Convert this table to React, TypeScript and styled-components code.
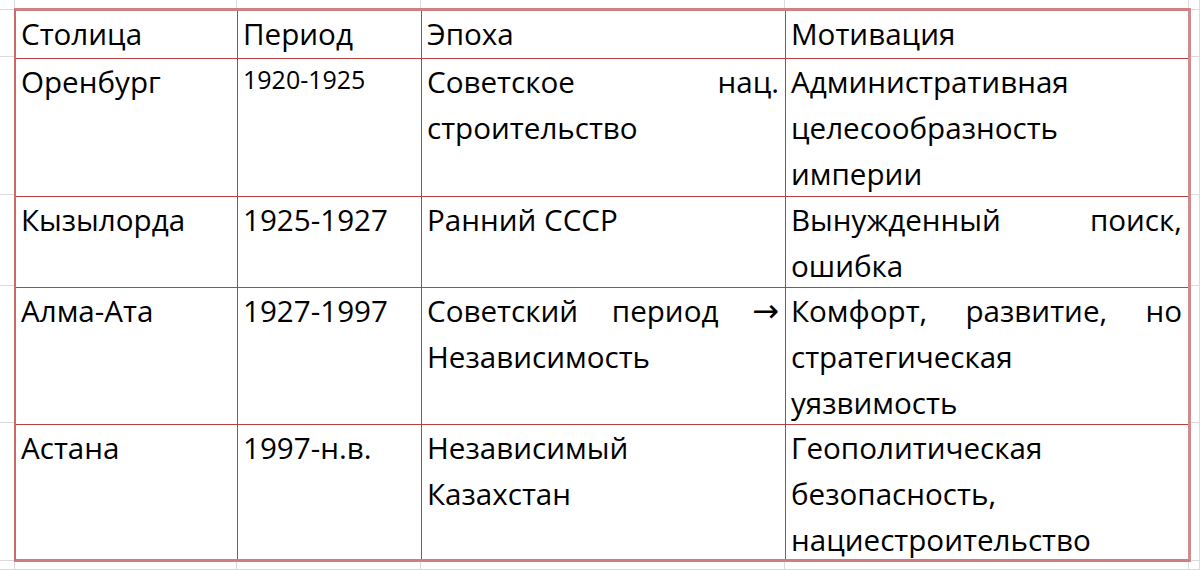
import React from "react";
import styled, { createGlobalStyle } from "styled-components";

const GlobalStyle = createGlobalStyle`
  html, body {
    margin: 0;
    padding: 0;
    background: #ffffff;
  }
  body {
    font-family: "Open Sans", "Noto Sans", sans-serif;
    color: #000;
  }
`;

const COLS = "15px 222px 184px 364px 404px 1fr";
const ROWS = "10px 47px 138px 91px 137px 138px 1fr";

type Line = { text: string; justify?: boolean; arrow?: boolean };

type Row = {
  city: string;
  period: string;
  small?: boolean;
  era: Line[];
  motive: Line[];
};

const rows: Row[] = [
  {
    city: "Оренбург",
    period: "1920-1925",
    small: true,
    era: [{ text: "Советское нац.", justify: true }, { text: "строительство" }],
    motive: [
      { text: "Административная" },
      { text: "целесообразность" },
      { text: "империи" },
    ],
  },
  {
    city: "Кызылорда",
    period: "1925-1927",
    era: [{ text: "Ранний СССР" }],
    motive: [{ text: "Вынужденный поиск,", justify: true }, { text: "ошибка" }],
  },
  {
    city: "Алма-Ата",
    period: "1927-1997",
    era: [{ text: "Советский период", justify: true, arrow: true }, { text: "Независимость" }],
    motive: [
      { text: "Комфорт, развитие, но", justify: true },
      { text: "стратегическая" },
      { text: "уязвимость" },
    ],
  },
  {
    city: "Астана",
    period: "1997-н.в.",
    era: [{ text: "Независимый" }, { text: "Казахстан" }],
    motive: [
      { text: "Геополитическая" },
      { text: "безопасность," },
      { text: "нациестроительство" },
    ],
  },
];

function Lines({ lines }: { lines: Line[] }) {
  return (
    <>
      {lines.map((l, i) => (
        <TextLine key={i} $justify={l.justify}>
          {l.text}
          {l.arrow && (
            <>
              {" "}
              <Arrow>→</Arrow>
            </>
          )}
        </TextLine>
      ))}
    </>
  );
}

export default function App() {
  // empty spreadsheet cells around the table
  const margin: { c: number; r: number }[] = [];
  for (let r = 1; r <= 7; r++) {
    for (let c = 1; c <= 6; c++) {
      const inside = r >= 2 && r <= 6 && c >= 2 && c <= 5;
      if (!inside) margin.push({ c, r });
    }
  }

  return (
    <>
      <GlobalStyle />
      <Sheet>
        {margin.map((m) => (
          <GridCell key={`${m.r}-${m.c}`} $col={m.c} $row={m.r} />
        ))}
        <Table>
          <Cell $first>
            <TextLine>Столица</TextLine>
          </Cell>
          <Cell $first>
            <TextLine>Период</TextLine>
          </Cell>
          <Cell $first>
            <TextLine>Эпоха</TextLine>
          </Cell>
          <Cell $first $last>
            <TextLine>Мотивация</TextLine>
          </Cell>
          {rows.map((row) => (
            <React.Fragment key={row.city}>
              <Cell>
                <TextLine>{row.city}</TextLine>
              </Cell>
              <Cell>
                <TextLine $small={row.small}>{row.period}</TextLine>
              </Cell>
              <Cell>
                <Lines lines={row.era} />
              </Cell>
              <Cell $last>
                <Lines lines={row.motive} />
              </Cell>
            </React.Fragment>
          ))}
        </Table>
      </Sheet>
    </>
  );
}

const Sheet = styled.div`
  display: grid;
  grid-template-columns: ${COLS};
  grid-template-rows: ${ROWS};
  width: 1200px;
  height: 570px;
  overflow: hidden;
`;

const GridCell = styled.div<{ $col: number; $row: number }>`
  grid-column: ${(p) => p.$col};
  grid-row: ${(p) => p.$row};
  border-right: 1px solid #dadada;
  border-bottom: 1px solid #dadada;
`;

const Table = styled.div`
  grid-column: 2 / 6;
  grid-row: 2 / 7;
  display: grid;
  grid-template-columns: 222px 184px 364px 1fr;
  grid-template-rows: 47px 138px 91px 137px 1fr;
  border-top: 3px solid #d08083;
  border-bottom: 3px solid #cf7d80;
  border-left: 2px solid #c9696c;
  border-right: 3px solid #d28a8c;
  margin: -2px -2px -1px -1px;
`;

const Cell = styled.div<{ $first?: boolean; $last?: boolean }>`
  border-top: ${(p) => (p.$first ? "none" : "1px solid #b8403f")};
  border-right: ${(p) => (p.$last ? "none" : "1px solid #b8403f")};
  padding: 0 6px 0 5px;
  font-size: 29.6px;
  line-height: 46px;
  overflow: hidden;
`;

const TextLine = styled.div<{ $justify?: boolean; $small?: boolean }>`
  text-align: ${(p) => (p.$justify ? "justify" : "left")};
  text-align-last: ${(p) => (p.$justify ? "justify" : "auto")};
  white-space: ${(p) => (p.$justify ? "normal" : "nowrap")};
  font-size: ${(p) => (p.$small ? "25px" : "inherit")};
  line-height: ${(p) => (p.$small ? "40px" : "inherit")};
`;

const Arrow = styled.span`
  font-family: "DejaVu Sans", sans-serif;
  font-size: 32px;
  line-height: 1;
`;
